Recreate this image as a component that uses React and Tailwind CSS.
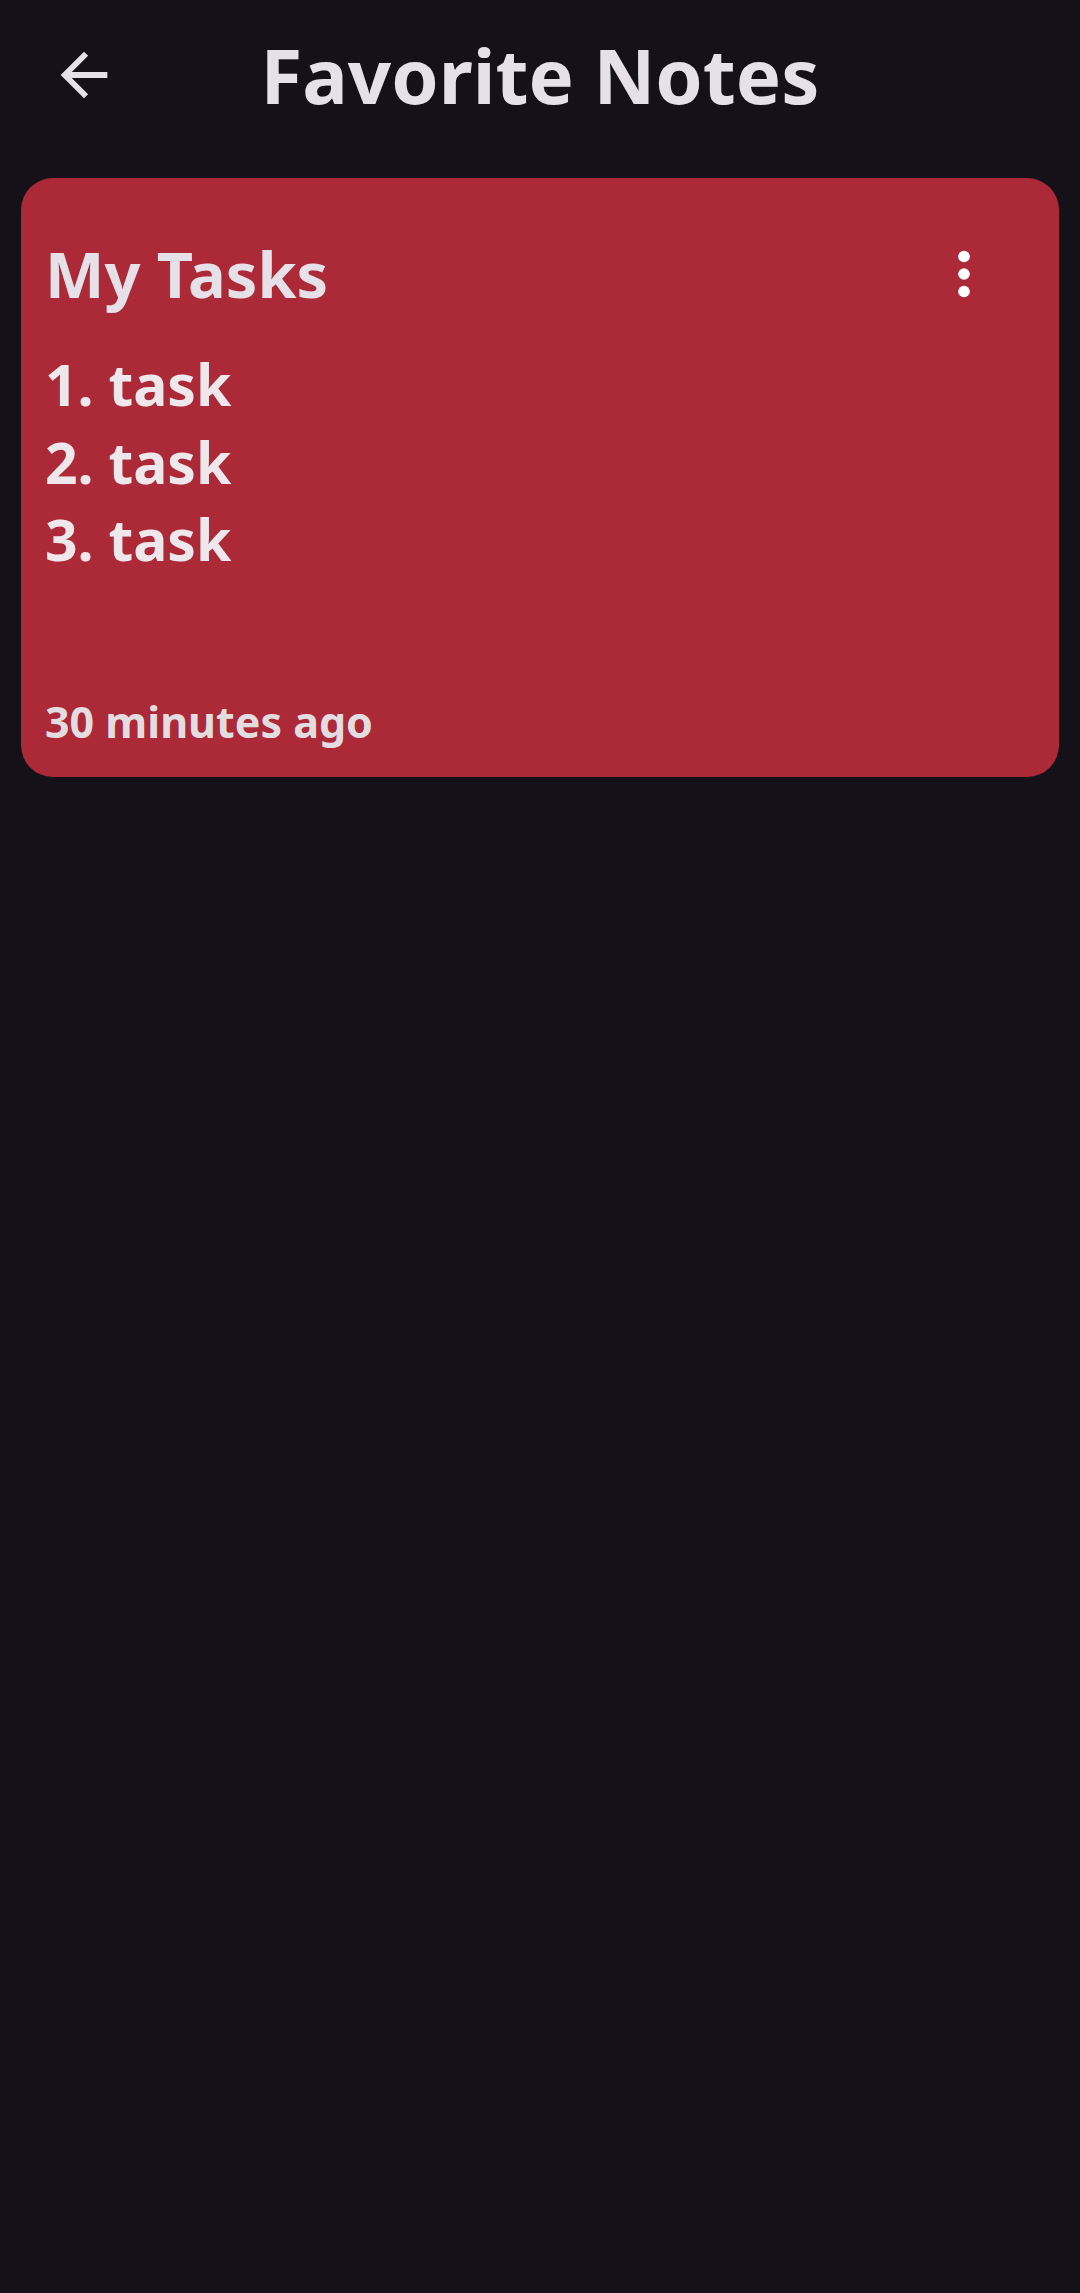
import React from 'react';

const notes = [
  {
    id: 1,
    title: 'My Tasks',
    lines: ['1. task', '2. task', '3. task'],
    time: '30 minutes ago',
  },
];

function ArrowBack() {
  return (
    <svg viewBox="0 0 24 24" className="w-[70px] h-[70px] fill-[#E6E0E9]">
      <path d="M20 11H7.83l5.59-5.59L12 4l-8 8 8 8 1.41-1.41L7.83 13H20v-2z" />
    </svg>
  );
}

function MoreVert() {
  return (
    <svg viewBox="0 0 24 24" className="w-[70px] h-[70px] fill-white">
      <circle cx="12" cy="6" r="2" />
      <circle cx="12" cy="12" r="2" />
      <circle cx="12" cy="18" r="2" />
    </svg>
  );
}

export default function App() {
  return (
    <div
      className="min-h-[2293px] w-full bg-[#141218] text-[#E6E0E9]"
      style={{ fontFamily: '"Noto Sans", "Open Sans", sans-serif' }}
    >
      {/* Top bar */}
      <div className="h-[150px] flex items-center px-[49px]">
        <button className="w-[70px] h-[70px] flex items-center justify-center">
          <ArrowBack />
        </button>
        <h1 className="flex-1 text-center text-[76px] font-bold leading-none">
          Favorite Notes
        </h1>
        <div className="w-[70px]" />
      </div>

      {/* Notes */}
      <div className="mt-[28px] mx-[21px] flex flex-col gap-6">
        {notes.map(note => (
          <div
            key={note.id}
            className="bg-[#AC2A37] rounded-[32px] pt-[53px] pb-[26px] pl-[24px] pr-[60px] flex flex-col"
          >
            <div className="flex items-center justify-between">
              <p className="text-[63px] font-bold leading-[86px]">{note.title}</p>
              <MoreVert />
            </div>
            <div className="mt-[29px] flex flex-col">
              {note.lines.map(line => (
                <p key={line} className="text-[57px] font-bold leading-[77.5px] text-[#EEE8EC]">
                  {line}
                </p>
              ))}
            </div>
            <p className="mt-[114px] text-[43px] font-bold leading-[58px] text-[#E3DDE1]">
              {note.time}
            </p>
          </div>
        ))}
      </div>
    </div>
  );
}
